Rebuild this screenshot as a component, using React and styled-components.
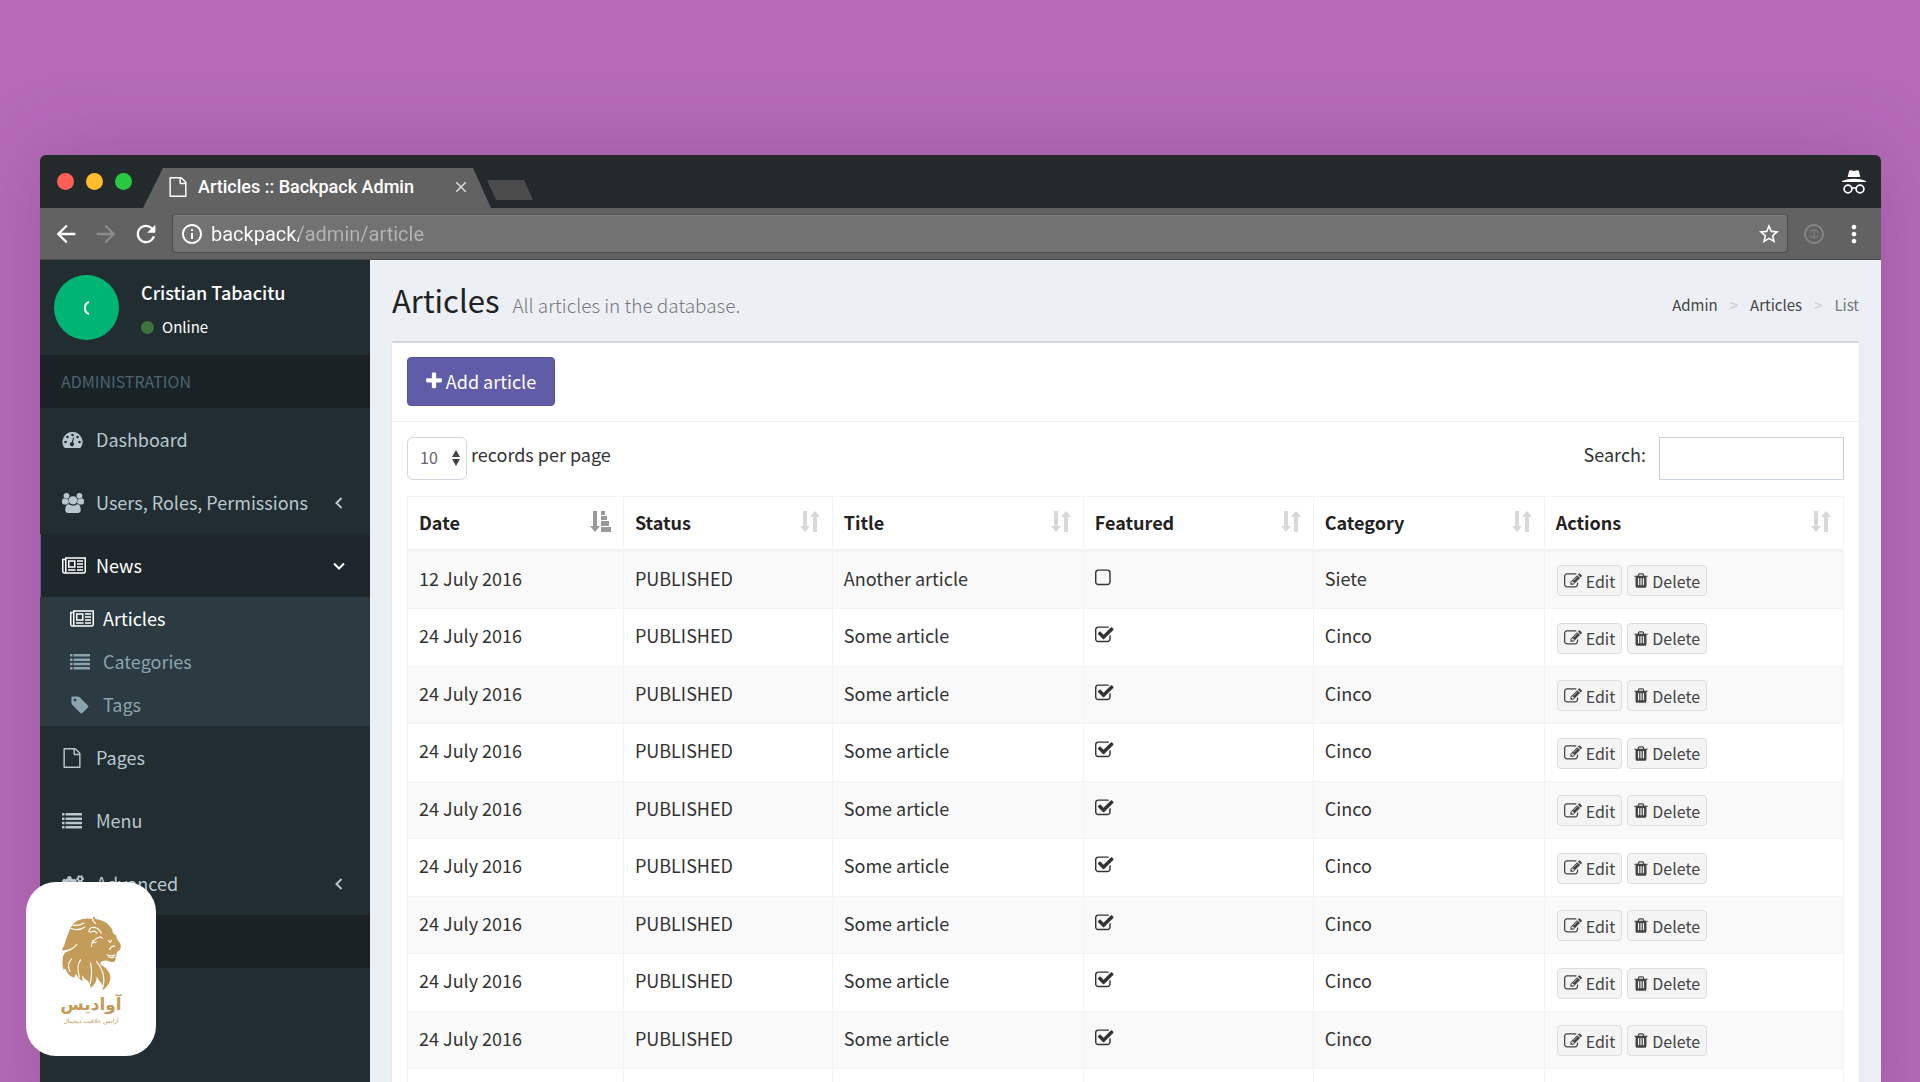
import { useState } from 'react'
import styled, { createGlobalStyle } from 'styled-components'
import { FaCogs } from 'react-icons/fa'
import { MdArrowBack, MdArrowForward, MdRefresh, MdInfoOutline, MdStarBorder, MdMoreVert, MdClose } from 'react-icons/md'

const GlobalStyle = createGlobalStyle`
  * {
    box-sizing: border-box;
  }
  body {
    margin: 0;
    background: #b56bb8;
    color: #333;
    font-family: "Noto Sans CJK SC", "Open Sans", sans-serif;
    font-size: 18px;
    line-height: 26px;
  }
  a {
    color: inherit;
    text-decoration: none;
  }
  button, input, select {
    font: inherit;
    color: inherit;
    margin: 0;
  }
  svg {
    display: block;
    flex: none;
  }
`

const Page = styled.div`
  height: 100vh;
  overflow: hidden;
  padding: 155px 39px 0 40px;
`

const Window = styled.div`
  display: flex;
  flex-direction: column;
  min-height: 100%;
  border-radius: 6px 6px 0 0;
  box-shadow: 0 0 80px rgba(90, 40, 100, 0.25);
`

const TitleBar = styled.div`
  display: flex;
  align-items: flex-end;
  height: 53px;
  padding: 0 15px 0 17px;
  background: #24292c;
  border-radius: 6px 6px 0 0;
`

const Lights = styled.div`
  display: flex;
  gap: 12px;
  align-self: center;
  width: 86px;
`

const Light = styled.span`
  width: 17px;
  height: 17px;
  border-radius: 50%;
  background: ${({ $color }) => $color};
`

const Tab = styled.div`
  display: flex;
  align-items: center;
  width: 348px;
  height: 40px;
  padding: 0 21px 2px 25px;
  background: #626262;
  clip-path: polygon(20px 0, 330px 0, 100% 100%, 0 100%);
  color: #fff;
  font-family: Roboto, sans-serif;
  font-size: 18px;
  font-weight: 500;
  line-height: 22px;
`

const TabTitle = styled.span`
  flex: 1;
  padding-left: 10px;
`

const PlainButton = styled.button`
  display: flex;
  align-items: center;
  justify-content: center;
  padding: 0;
  border: none;
  background: none;
  color: ${({ $color }) => $color || '#fff'};
`

const NewTab = styled(PlainButton)`
  width: 46px;
  height: 20px;
  margin: 0 0 8px -4px;
  background: #4b4b4b;
  clip-path: polygon(0 0, 37px 0, 100% 100%, 9px 100%);
`

const Incognito = styled.div`
  margin-left: auto;
  align-self: center;
`

const ToolBar = styled.div`
  display: flex;
  align-items: center;
  gap: 12px;
  height: 52px;
  padding: 0 13px 0 12px;
  background: #626262;
  border-bottom: 1px solid #4a4a4a;
`

const Address = styled.div`
  display: flex;
  align-items: center;
  flex: 1;
  gap: 7px;
  height: 39px;
  padding: 0 6px 0 7px;
  background: #727272;
  border: 1px solid #4d4d4d;
  border-top-color: #555;
  border-radius: 4px;
  box-shadow: inset 0 1px 0 #808080;
  color: #fff;
`

const UrlInput = styled.input`
  flex: 1;
  height: 26px;
  padding: 0;
  border: none;
  outline: none;
  font-family: Roboto, sans-serif;
  font-size: 20px;
  background: linear-gradient(90deg, #fff 88px, #b4b4b4 88px);
  background-clip: text;
  -webkit-text-fill-color: transparent;
`

const Body = styled.div`
  display: flex;
  flex: 1;
`

const Sidebar = styled.aside`
  width: 330px;
  flex: none;
  background: #222d32;
  color: #b8c7ce;
`

const User = styled.div`
  display: flex;
  gap: 22px;
  height: 95px;
  padding: 15px 14px;
  color: #fff;
`

const Avatar = styled.div`
  display: flex;
  align-items: center;
  justify-content: center;
  width: 65px;
  height: 65px;
  border-radius: 50%;
  background: #00b574;
`

const UserName = styled.div`
  padding-top: 4px;
  font-weight: 500;
`

const Online = styled.a`
  display: flex;
  align-items: center;
  gap: 8px;
  padding-top: 9px;
  font-size: 15px;
`

const Dot = styled.span`
  width: 13px;
  height: 13px;
  border-radius: 50%;
  background: #3c763d;
`

const NavHeader = styled.div`
  height: 53px;
  padding: 13px 21px;
  background: #1a2226;
  color: #4b646f;
  font-size: 16px;
`

const NavLink = styled.a`
  display: flex;
  align-items: center;
  height: 63px;
  padding: 0 24px 0 21px;
  border-left: 1px solid ${({ $active }) => ($active ? '#605ca8' : 'transparent')};
  background: ${({ $active }) => ($active ? '#1e282c' : 'none')};
  color: ${({ $active }) => ($active ? '#fff' : 'inherit')};
`

const NavIcon = styled.span`
  width: ${({ $sub }) => ($sub ? 33 : 34)}px;
`

const NavLabel = styled.span`
  flex: 1;
  padding-bottom: 2px;
`

const SubMenu = styled.div`
  background: #2c3b41;
`

const SubLink = styled.a`
  display: flex;
  align-items: center;
  height: 43px;
  padding-left: 30px;
  color: ${({ $active }) => ($active ? '#fff' : '#8aa4af')};
`

const Content = styled.main`
  flex: 1;
  min-width: 0;
  padding: 0 22px;
  background: #ecf0f5;
`

const ContentHeader = styled.header`
  display: flex;
  align-items: center;
  justify-content: space-between;
  height: 81px;
`

const Heading = styled.h1`
  margin: 0;
  padding-top: 3px;
  color: #222;
  font-size: 31px;
  font-weight: 400;
  line-height: 40px;
`

const SubHeading = styled.small`
  padding-left: 13px;
  color: #777;
  font-size: 19px;
  font-weight: 300;
`

const Breadcrumb = styled.nav`
  display: flex;
  gap: 12px;
  padding-top: 8px;
  color: #444;
  font-size: 15px;
`

const Crumb = styled.span`
  color: ${({ $sep }) => ($sep ? '#ccc' : '#777')};
`

const Box = styled.section`
  background: #fff;
  border-top: 2px solid #d2d6de;
  border-radius: 2px;
  box-shadow: 0 1px 2px rgba(0, 0, 0, 0.1);
`

const BoxHeader = styled.div`
  padding: 14px 15px 15px;
  border-bottom: 1px solid #f0f0f0;
`

const AddButton = styled.button`
  display: flex;
  align-items: center;
  justify-content: center;
  gap: 2px;
  width: 148px;
  height: 49px;
  padding: 0 2px 2px 0;
  background: #605ca8;
  border: 1px solid #555299;
  border-radius: 4px;
  color: #fff;
`

const BoxBody = styled.div`
  padding: 15px;
`

const Controls = styled.div`
  display: flex;
  justify-content: space-between;
  margin-bottom: 16px;
`

const Length = styled.div`
  display: flex;
  gap: 4px;
`

const SelectWrap = styled.div`
  position: relative;
  width: 60px;
  height: 43px;
`

const Select = styled.select`
  appearance: none;
  width: 100%;
  height: 100%;
  padding: 0 12px 4px;
  background: #fff;
  border: 1px solid #d2d6de;
  border-radius: 6px;
  color: #666;
  font-size: 16px;
`

const SelectArrows = styled.svg`
  position: absolute;
  right: 7px;
  top: 13px;
  pointer-events: none;
`

const ControlLabel = styled.label`
  padding-top: 4px;
`

const Search = styled.div`
  display: flex;
  gap: 13px;
`

const SearchInput = styled.input`
  width: 185px;
  height: 43px;
  padding: 0 12px;
  background: #fff;
  border: 1px solid #c8d0dc;
`

const Table = styled.table`
  width: 100%;
  table-layout: fixed;
  border-collapse: separate;
  border-spacing: 0;
  border: solid #f4f4f4;
  border-width: 1px 0 0 1px;
`

const Th = styled.th`
  height: 55px;
  padding: 0 12px 2px 11px;
  border-right: 1px solid #f4f4f4;
  border-bottom: 3px solid #f4f4f4;
  color: #222;
  font-weight: 700;
  text-align: left;
`

const ThInner = styled.div`
  display: flex;
  align-items: center;
  justify-content: space-between;
`

const Row = styled.tr`
  &:nth-child(odd) {
    background: #f9f9f9;
  }
  &:nth-child(even) td {
    height: 58px;
  }
`

const Td = styled.td`
  height: 57px;
  padding: 0 11px 5px;
  border-right: 1px solid #f4f4f4;
  border-bottom: 1px solid #f4f4f4;
`

const Tick = styled.label`
  display: block;
  position: relative;
  width: 20px;
`

const TickInput = styled.input`
  position: absolute;
  inset: 0;
  opacity: 0;
`

const Actions = styled.div`
  display: flex;
  gap: 5px;
  padding: 6px 0 0 1px;
`

const SmallButton = styled.button`
  display: flex;
  align-items: center;
  gap: 4px;
  height: 31px;
  padding: 0 6px;
  background: #f4f4f4;
  border: 1px solid #ddd;
  border-radius: 4px;
  color: #444;
  font-size: 16px;
`

const LogoCard = styled.div`
  position: fixed;
  left: 26px;
  bottom: 26px;
  display: flex;
  flex-direction: column;
  align-items: center;
  width: 130px;
  height: 174px;
  padding-top: 34px;
  background: #fff;
  border-radius: 30px;
  color: #c49c5a;
  font-family: "DejaVu Sans", sans-serif;
`

const LogoName = styled.div`
  font-size: 17px;
  font-weight: 700;
  line-height: 26px;
`

const LogoText = styled.div`
  font-size: 6px;
  line-height: 8px;
`

const paths = {
  newspaper: 'M1024 512h-384v384h384v-384zm128 640v128h-640v-128h640zm0-768v640h-640v-640h640zm640 768v128h-512v-128h512zm0-256v128h-512v-128h512zm0-256v128h-512v-128h512zm0-256v128h-512v-128h512zm-1536 960v-960h-128v960q0 26 19 45t45 19 45-19 19-45zm1664 0v-1088h-1536v1088q0 33-11 64h1483q26 0 45-19t19-45zm128-1216v1216q0 80-56 136t-136 56h-1664q-80 0-136-56t-56-136v-1088h256v-128h1792z',
  file: 'M1596 380q28 28 48 76t20 88v1152q0 40-28 68t-68 28h-1344q-40 0-68-28t-28-68v-1600q0-40 28-68t68-28h896q40 0 88 20t76 48zm-444-244v376h376q-10-29-22-41l-313-313q-12-12-41-22zm384 1528v-1024h-416q-40 0-68-28t-28-68v-416h-768v1536h1280z',
  list: 'M0 1340h224v224h-224zM0 956h224v224h-224zM0 572h224v224h-224zM0 188h224v224h-224zM320 1340h1472v224h-1472zM320 956h1472v224h-1472zM320 572h1472v224h-1472zM320 188h1472v224h-1472z',
  tag: 'M576 448q0-53-37.500-90.500t-90.500-37.500-90.500 37.500-37.500 90.500 37.500 90.500 90.500 37.500 90.500-37.500 37.500-90.500zm1067 576q0 53-37 90l-491 492q-39 37-91 37-53 0-90-37l-715-716q-38-37-64.500-101t-26.500-117v-416q0-52 38-90t90-38h416q53 0 117 26.500t102 64.500l715 714q37 39 37 91z',
  plus: 'M1600 736v192q0 40-28 68t-68 28h-416v416q0 40-28 68t-68 28h-192q-40 0-68-28t-28-68v-416h-416q-40 0-68-28t-28-68v-192q0-40 28-68t68-28h416v-416q0-40 28-68t68-28h192q40 0 68 28t28 68v416h416q40 0 68 28t28 68z',
  square: 'M1312 256h-832q-66 0-113 47t-47 113v832q0 66 47 113t113 47h832q66 0 113-47t47-113v-832q0-66-47-113t-113-47zm288 160v832q0 119-84.500 203.500t-203.500 84.500h-832q-119 0-203.500-84.500t-84.500-203.500v-832q0-119 84.500-203.500t203.500-84.500h832q119 0 203.500 84.500t84.500 203.500z',
  check: 'M1472 930v318q0 119-84.500 203.500t-203.500 84.500h-832q-119 0-203.500-84.500t-84.500-203.500v-832q0-119 84.500-203.500t203.500-84.500h832q63 0 117 25 15 7 18 23 3 17-9 29l-49 49q-10 10-23 10-3 0-9-2-23-6-45-6h-832q-66 0-113 47t-47 113v832q0 66 47 113t113 47h832q66 0 113-47t47-113v-254q0-13 9-22l64-64q10-10 23-10 6 0 12 3 20 8 20 29zm231-489l-814 814q-24 24-57 24t-57-24l-430-430q-24-24-24-57t24-57l110-110q24-24 57-24t57 24l263 263 647-647q24-24 57-24t57 24l110 110q24 24 24 57t-24 57z',
  trash: 'M704 1376v-704q0-14-9-23t-23-9h-64q-14 0-23 9t-9 23v704q0 14 9 23t23 9h64q14 0 23-9t9-23zm256 0v-704q0-14-9-23t-23-9h-64q-14 0-23 9t-9 23v704q0 14 9 23t23 9h64q14 0 23-9t9-23zm256 0v-704q0-14-9-23t-23-9h-64q-14 0-23 9t-9 23v704q0 14 9 23t23 9h64q14 0 23-9t9-23zm-544-992h448l-48-117q-7-9-17-11h-317q-10 2-17 11zm928 32v64q0 14-9 23t-23 9h-96v948q0 83-47 143.500t-113 60.500h-832q-66 0-113-58.500t-47-141.500v-952h-96q-14 0-23-9t-9-23v-64q0-14 9-23t23-9h309l70-167q15-37 54-63t79-26h320q40 0 79 26t54 63l70 167h309q14 0 23 9t9 23z',
  edit: 'M888 1184l116-116-152-152-116 116v56h96v96h56zm440-720q-16-16-33 1l-350 350q-17 17-1 33t33-1l350-350q17-17 1-33zm80 594v190q0 119-84.500 203.500t-203.500 84.500h-832q-119 0-203.500-84.500t-84.500-203.500v-832q0-119 84.500-203.500t203.500-84.500h832q63 0 117 25 15 7 18 23 3 17-9 29l-49 49q-14 14-32 8-23-6-45-6h-832q-66 0-113 47t-47 113v832q0 66 47 113t113 47h832q66 0 113-47t47-113v-126q0-13 9-22l64-64q15-15 35-7t20 29zm-96-738l288 288-672 672h-288v-288zm444 132l-92 92-288-288 92-92q28-28 68-28t68 28l152 152q28 28 28 68t-28 68z',
}

const Icon = ({ name, size = 20, width = size, box = '0 0 1792 1792' }) => (
  <svg width={width} height={size} viewBox={box} fill="currentColor">
    <path d={paths[name]} />
  </svg>
)

const NewsIcon = () => (
  <svg width="24" height="21" viewBox="0 -60 2048 1792" fill="currentColor">
    <path d={paths.newspaper} />
  </svg>
)

const DashboardIcon = () => (
  <svg width="21" height="20" viewBox="0 0 20 20">
    <path d="M10 2a10 10 0 0 0-8.500 15.300q.4.700 1.200.7h14.600q.8 0 1.200-.7A10 10 0 0 0 10 2z" fill="currentColor" />
    <g fill="#222d32">
      <circle cx="3" cy="12" r="1.300" />
      <circle cx="5" cy="7" r="1.300" />
      <circle cx="10" cy="5" r="1.300" />
      <circle cx="15" cy="7" r="1.300" />
      <circle cx="17" cy="12" r="1.300" />
      <path d="M10.600 7.500l1 .3-1 4.600a2.100 2.100 0 1 1-1.200-.3z" />
    </g>
  </svg>
)

const UsersIcon = () => (
  <svg width="22" height="22" viewBox="0 0 22 22" fill="currentColor">
    <circle cx="4.500" cy="3.800" r="2.900" />
    <circle cx="17.500" cy="3.800" r="2.900" />
    <path d="M0 10q0-3.700 2-3.700 2.200 1.300 4.600.7-.6 2.500.6 4.300-1.600 0-2.700 1.200H2q-2 0-2-2.500zM22 10q0-3.700-2-3.700-2.200 1.300-4.600.7.600 2.500-.6 4.300 1.600 0 2.700 1.200H20q2 0 2-2.500z" />
    <circle cx="11" cy="8.300" r="4.100" />
    <path d="M3.300 18q0-5.700 3.400-5.700 2 1.400 4.300 1.400t4.300-1.400q3.400 0 3.400 5.700 0 3-2.900 3H6.200q-2.900 0-2.900-3z" />
  </svg>
)

const Chevron = ({ down }) => (
  <svg width="14" height="14" viewBox="0 0 14 14" fill="none" stroke="currentColor" strokeWidth="2">
    <path d={down ? 'M2 4.500l5 5 5-5' : 'M9.500 2l-5 5 5 5'} />
  </svg>
)

const SortIcon = ({ active }) => active ? (
  <svg width="21" height="22" viewBox="0 0 21 22" fill="#999">
    <path d="M3 0h4v15h3l-5 6-5-6h3zM11 0h4v4h-4zM11 5h6v4h-6zM11 10h8v5h-8zM11 16h10v5h-10z" />
  </svg>
) : (
  <svg width="20" height="22" viewBox="0 0 20 22" fill="#d8d8d8">
    <path d="M3 0h4v15h3l-5 6-5-6h3zM13 21h4V6h3l-5-6-5 6h3z" />
  </svg>
)

const IncognitoIcon = () => (
  <svg width="24" height="24" viewBox="0 0 24 24" fill="#fff">
    <path d="M7 1.500q.5-1.500 1.800-1.200L12 1l3.200-.7Q16.500 0 17 1.500L18.300 7H5.700zM0 11q5-2.200 12-2.200T24 11v1H0z" />
    <g fill="none" stroke="#fff" strokeWidth="1.700">
      <circle cx="6" cy="19" r="3.900" />
      <circle cx="18" cy="19" r="3.900" />
      <path d="M10 18.500q2-1.500 4 0" />
    </g>
  </svg>
)

const Lion = () => (
  <svg width="59" height="75" viewBox="95 47 178 226">
    <path
      fill="currentColor"
      d="M187 56Q187 49 193 48Q192 54 199 57Q222 60 236 74Q248 86 249 99Q262 106 260 114Q266 124 271 131Q274 140 270 149Q261 154 259 160Q262 168 256 171Q259 179 252 185Q244 188 235 183Q226 179 218 183Q209 186 211 193Q230 202 238 219Q245 236 236 251Q230 262 217 272Q220 258 214 250Q204 240 200 229Q200 252 181 264Q181 249 170 241Q160 236 156 225Q155 236 158 243Q144 238 139 222Q132 226 133 233Q112 228 106 207Q101 204 101 212Q94 196 97 178Q97 166 104 158Q114 152 122 146Q108 152 97 151Q94 145 101 137Q108 112 118 89Q125 70 144 60Q165 52 187 56Z"
    />
    <g fill="none" stroke="#fff" strokeLinecap="round" strokeWidth="3.500">
      <path d="M119 83Q145 94 164 80M129 75Q148 77 161 68M98 155Q125 150 139 133" />
      <path d="M187 53Q187 63 196 69M176 94Q178 80 192 81Q207 83 213 98M180 97Q190 87 201 98" />
      <path d="M184 139Q184 119 207 111Q213 108 216 114M187 121Q190 131 198 125" />
      <path d="M235 121L241 126L244 120M254 137Q241 139 239 148M231 164Q241 169 255 165M235 170Q244 174 252 171" />
      <path d="M124 176Q108 191 119 214M151 179Q137 198 148 232M181 188Q188 220 180 251M199 184Q229 220 219 261" />
    </g>
  </svg>
)

const columns = [
  { name: 'Date', width: 215 },
  { name: 'Status', width: 208 },
  { name: 'Title', width: 250 },
  { name: 'Featured', width: 229 },
  { name: 'Category', width: 230 },
  { name: 'Actions', width: 298 },
]

const some = { date: '24 July 2016', title: 'Some article', featured: true, category: 'Cinco' }
const articles = [
  { date: '12 July 2016', title: 'Another article', featured: false, category: 'Siete' },
  ...Array(9).fill(some),
]

const ArticleRow = ({ article }) => {
  const [featured, setFeatured] = useState(article.featured)

  return (
    <Row>
      <Td>{article.date}</Td>
      <Td>PUBLISHED</Td>
      <Td>{article.title}</Td>
      <Td>
        <Tick>
          <TickInput
            type="checkbox"
            aria-label="Featured"
            checked={featured}
            onChange={({ target }) => setFeatured(target.checked)}
          />
          <Icon name={featured ? 'check' : 'square'} box={featured ? '64 0 1792 1792' : '192 0 1792 1792'} />
        </Tick>
      </Td>
      <Td>{article.category}</Td>
      <Td>
        <Actions>
          <SmallButton type="button"><Icon name="edit" size={18} />Edit</SmallButton>
          <SmallButton type="button"><Icon name="trash" size={17} width={14} box="160 0 1472 1792" />Delete</SmallButton>
        </Actions>
      </Td>
    </Row>
  )
}

const Browser = () => {
  const [url, setUrl] = useState('backpack/admin/article')

  return (
    <>
      <TitleBar>
        <Lights>
          <Light $color="#ff5f57" />
          <Light $color="#ffbd2e" />
          <Light $color="#28c940" />
        </Lights>
        <Tab>
          <Icon name="file" />
          <TabTitle>Articles :: Backpack Admin</TabTitle>
          <PlainButton type="button" aria-label="Close tab" $color="#ddd"><MdClose size={18} /></PlainButton>
        </Tab>
        <NewTab type="button" aria-label="New tab" />
        <Incognito><IncognitoIcon /></Incognito>
      </TitleBar>
      <ToolBar>
        <PlainButton type="button" aria-label="Back"><MdArrowBack size={28} /></PlainButton>
        <PlainButton type="button" aria-label="Forward" $color="#8c8c8c"><MdArrowForward size={28} /></PlainButton>
        <PlainButton type="button" aria-label="Reload"><MdRefresh size={28} /></PlainButton>
        <Address>
          <MdInfoOutline size={24} />
          <UrlInput aria-label="Address" value={url} onChange={({ target }) => setUrl(target.value)} />
          <MdStarBorder size={24} />
        </Address>
        <svg width="28" height="28" viewBox="0 0 28 28" fill="none" stroke="#858585" strokeWidth="2">
          <circle cx="14" cy="14" r="9" />
          <path d="M10 13q0-3 4-3t4 3M10 15q0 3 4 3t4-3M14 10v8" strokeWidth="1" />
        </svg>
        <PlainButton type="button" aria-label="More"><MdMoreVert size={28} /></PlainButton>
      </ToolBar>
    </>
  )
}

const Menu = () => (
  <Sidebar>
    <User>
      <Avatar>
        <svg width="8" height="14" viewBox="0 0 8 14" fill="none" stroke="#fff" strokeWidth="2">
          <path d="M6 1Q2 2 2 7t4 6" />
        </svg>
      </Avatar>
      <div>
        <UserName>Cristian Tabacitu</UserName>
        <Online href="#"><Dot />Online</Online>
      </div>
    </User>
    <NavHeader>ADMINISTRATION</NavHeader>
    <NavLink href="#"><NavIcon><DashboardIcon /></NavIcon><NavLabel>Dashboard</NavLabel></NavLink>
    <NavLink href="#"><NavIcon><UsersIcon /></NavIcon><NavLabel>Users, Roles, Permissions</NavLabel><Chevron /></NavLink>
    <NavLink href="#" $active><NavIcon><NewsIcon /></NavIcon><NavLabel>News</NavLabel><Chevron down /></NavLink>
    <SubMenu>
      <SubLink href="#" $active><NavIcon $sub><NewsIcon /></NavIcon><NavLabel>Articles</NavLabel></SubLink>
      <SubLink href="#"><NavIcon $sub><Icon name="list" /></NavIcon><NavLabel>Categories</NavLabel></SubLink>
      <SubLink href="#"><NavIcon $sub><Icon name="tag" /></NavIcon><NavLabel>Tags</NavLabel></SubLink>
    </SubMenu>
    <NavLink href="#"><NavIcon><Icon name="file" /></NavIcon><NavLabel>Pages</NavLabel></NavLink>
    <NavLink href="#"><NavIcon><Icon name="list" /></NavIcon><NavLabel>Menu</NavLabel></NavLink>
    <NavLink href="#"><NavIcon><FaCogs size={22} /></NavIcon><NavLabel>Advanced</NavLabel><Chevron /></NavLink>
    <NavHeader />
  </Sidebar>
)

const App = () => {
  const [search, setSearch] = useState('')

  return (
    <Page>
      <GlobalStyle />
      <Window>
        <Browser />
        <Body>
          <Menu />
          <Content>
            <ContentHeader>
              <Heading>Articles<SubHeading>All articles in the database.</SubHeading></Heading>
              <Breadcrumb>
                <a href="#">Admin</a>
                <Crumb $sep>&gt;</Crumb>
                <a href="#">Articles</a>
                <Crumb $sep>&gt;</Crumb>
                <Crumb>List</Crumb>
              </Breadcrumb>
            </ContentHeader>
            <Box>
              <BoxHeader>
                <AddButton type="button"><Icon name="plus" />Add article</AddButton>
              </BoxHeader>
              <BoxBody>
                <Controls>
                  <Length>
                    <SelectWrap>
                      <Select id="length" defaultValue="10">
                        <option>10</option>
                        <option>25</option>
                        <option>50</option>
                      </Select>
                      <SelectArrows width="8" height="16" viewBox="0 0 8 16" fill="#444">
                        <path d="M4 0l4 7H0zM4 16l4-7H0z" />
                      </SelectArrows>
                    </SelectWrap>
                    <ControlLabel htmlFor="length">records per page</ControlLabel>
                  </Length>
                  <Search>
                    <ControlLabel htmlFor="search">Search:</ControlLabel>
                    <SearchInput id="search" value={search} onChange={({ target }) => setSearch(target.value)} />
                  </Search>
                </Controls>
                <Table>
                  <colgroup>
                    {columns.map(c => <col key={c.name} width={c.width} />)}
                  </colgroup>
                  <thead>
                    <tr>
                      {columns.map(c => (
                        <Th key={c.name}>
                          <ThInner>{c.name}<SortIcon active={c.name === 'Date'} /></ThInner>
                        </Th>
                      ))}
                    </tr>
                  </thead>
                  <tbody>
                    {articles.map((a, i) => <ArticleRow key={i} article={a} />)}
                  </tbody>
                </Table>
              </BoxBody>
            </Box>
          </Content>
        </Body>
      </Window>
      <LogoCard>
        <Lion />
        <LogoName dir="rtl" lang="fa">آوادیس</LogoName>
        <LogoText dir="rtl" lang="fa">آژانس خلاقیت دیجیتال</LogoText>
      </LogoCard>
    </Page>
  )
}

export default App
